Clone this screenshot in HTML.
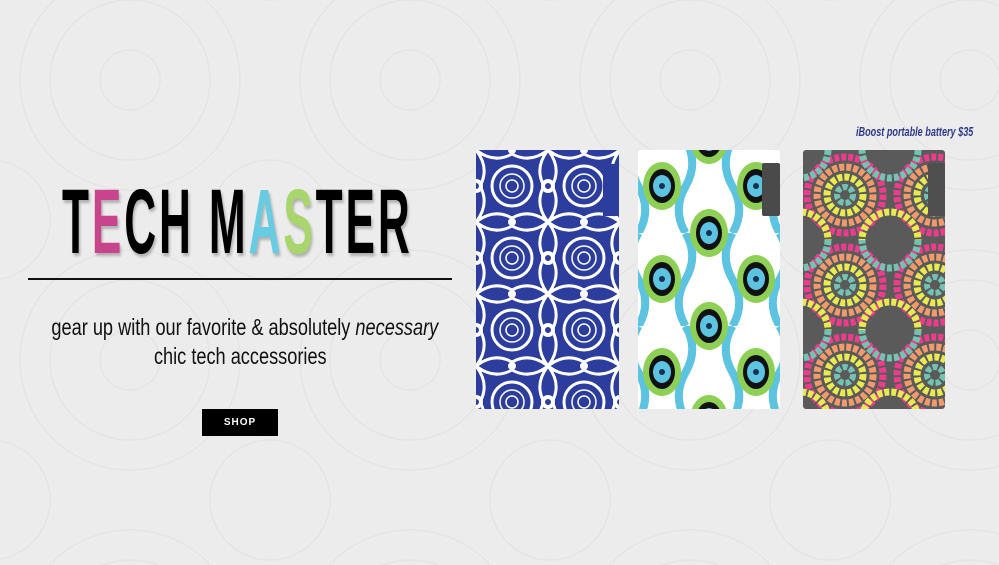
<!DOCTYPE html>
<html><head><meta charset="utf-8"><style>
html,body{margin:0;padding:0}
body{width:999px;height:565px;overflow:hidden;background:#ececec;position:relative;font-family:"Liberation Sans",sans-serif}
.title{position:absolute;left:62px;top:176px;font-size:92px;line-height:92px;color:#000;white-space:nowrap;transform-origin:0 0;transform:scaleX(0.48);letter-spacing:6px;font-weight:bold;text-shadow:3px 3px 4px rgba(0,0,0,.25)}
.rule{position:absolute;left:28px;top:278px;width:424px;height:2px;background:#111}
.sub{position:absolute;left:0;width:480px;text-align:center;font-size:23px;color:#111;white-space:nowrap}
.sub span{display:inline-block;transform:scaleX(0.79)}
.btn{position:absolute;left:202px;top:409px;width:76px;height:27px;background:#000;color:#fff;font-size:10px;font-weight:bold;letter-spacing:1px;text-align:center;line-height:27px}
.cap{position:absolute;left:856px;top:124px;color:#2d3a8c;font-style:italic;font-weight:bold;font-size:13px;white-space:nowrap;transform-origin:0 0;transform:scaleX(0.7)}
svg{position:absolute;left:0;top:0}
</style></head><body>
<svg width="999" height="565">
<defs>
<pattern id="bg" width="280" height="280" patternUnits="userSpaceOnUse" x="-10" y="-60">
<g fill="none" stroke="#e4e4e4" stroke-width="1.5">
<circle cx="140" cy="140" r="110"/><circle cx="140" cy="140" r="80"/><circle cx="0" cy="0" r="60"/><circle cx="280" cy="0" r="60"/><circle cx="0" cy="280" r="60"/><circle cx="280" cy="280" r="60"/><circle cx="140" cy="140" r="30"/>
</g></pattern>
<pattern id="p1" width="72" height="72" patternUnits="userSpaceOnUse" x="476" y="150">
<rect width="72" height="72" fill="#2c3d9e"/>
<g fill="none" stroke="#fff" stroke-width="3">
<circle cx="36" cy="36" r="20"/><circle cx="36" cy="36" r="12" stroke-width="1.5"/><circle cx="36" cy="36" r="6" stroke-width="1.5"/>
<path d="M0 0 Q18 14 36 4 Q54 14 72 0 M0 72 Q18 58 36 68 Q54 58 72 72 M0 0 Q14 18 4 36 Q14 54 0 72 M72 0 Q58 18 68 36 Q58 54 72 72"/>
</g>
<g fill="#fff"><circle cx="0" cy="36" r="7"/><circle cx="72" cy="36" r="7"/><circle cx="36" cy="0" r="4"/><circle cx="36" cy="72" r="4"/></g>
<g fill="#2c3d9e"><circle cx="0" cy="36" r="3"/><circle cx="72" cy="36" r="3"/></g>
</pattern>
<pattern id="p2" width="94" height="93" patternUnits="userSpaceOnUse" x="615" y="140">
<rect width="94" height="93" fill="#fff"/>
<g fill="none" stroke="#5cc3e0" stroke-width="8">
<path d="M23.5 0 Q10 23 23.5 46.5 Q37 70 23.5 93 M70.5 0 Q84 23 70.5 46.5 Q57 70 70.5 93"/>
</g>
<g id="eye"><ellipse cx="47" cy="46" rx="19" ry="24" fill="#8ecf55"/><ellipse cx="47" cy="46" rx="13" ry="17" fill="#111"/><ellipse cx="47" cy="46" rx="9" ry="11" fill="#5cc3e0"/><circle cx="47" cy="46" r="3" fill="#1a3050"/></g>
<use href="#eye" x="-47" y="-46"/><use href="#eye" x="47" y="-46"/><use href="#eye" x="-47" y="47"/><use href="#eye" x="47" y="47"/>
</pattern>
<pattern id="p3" width="90" height="90" patternUnits="userSpaceOnUse" x="800" y="150">
<rect width="90" height="90" fill="#5a5a5a"/>
<g fill="none" stroke-dasharray="5 2">
<circle cx="45" cy="45" r="38" stroke="#ee3c8c" stroke-width="7"/>
<circle cx="45" cy="45" r="28" stroke="#f39a6c" stroke-width="7"/>
<circle cx="45" cy="45" r="18" stroke="#e9ea52" stroke-width="7"/>
<circle cx="45" cy="45" r="8" stroke="#74c3b2" stroke-width="6"/>
<circle cx="0" cy="0" r="28" stroke="#74c3b2" stroke-width="7"/><circle cx="90" cy="0" r="28" stroke="#74c3b2" stroke-width="7"/><circle cx="0" cy="90" r="28" stroke="#e9ea52" stroke-width="7"/><circle cx="90" cy="90" r="28" stroke="#e9ea52" stroke-width="7"/>
</g></pattern>
</defs>
<rect width="999" height="565" fill="url(#bg)"/>
<rect x="476" y="150" width="143" height="259" rx="3" fill="url(#p1)"/>
<rect x="603" y="164" width="16" height="52" fill="#2c3d9e"/>
<rect x="638" y="150" width="142" height="259" rx="3" fill="url(#p2)"/>
<rect x="762" y="163" width="18" height="53" rx="2" fill="#4a4a4a"/>
<rect x="803" y="150" width="142" height="259" rx="3" fill="url(#p3)"/>
<rect x="928" y="163" width="17" height="53" rx="2" fill="#4f4f4f"/>
</svg>
<div class="cap">iBoost portable battery $35</div>
<div class="title">T<span style="color:#c8458e">E</span>CH M<span style="color:#67cbe2">A</span><span style="color:#a8d56c">S</span>TER</div>
<div class="rule"></div>
<div class="sub" style="top:314px"><span>gear up with our favorite &amp; absolutely <i>necessary</i></span></div>
<div class="sub" style="top:343px"><span>chic tech accessories</span></div>
<div class="btn">SHOP</div>
</body></html>
